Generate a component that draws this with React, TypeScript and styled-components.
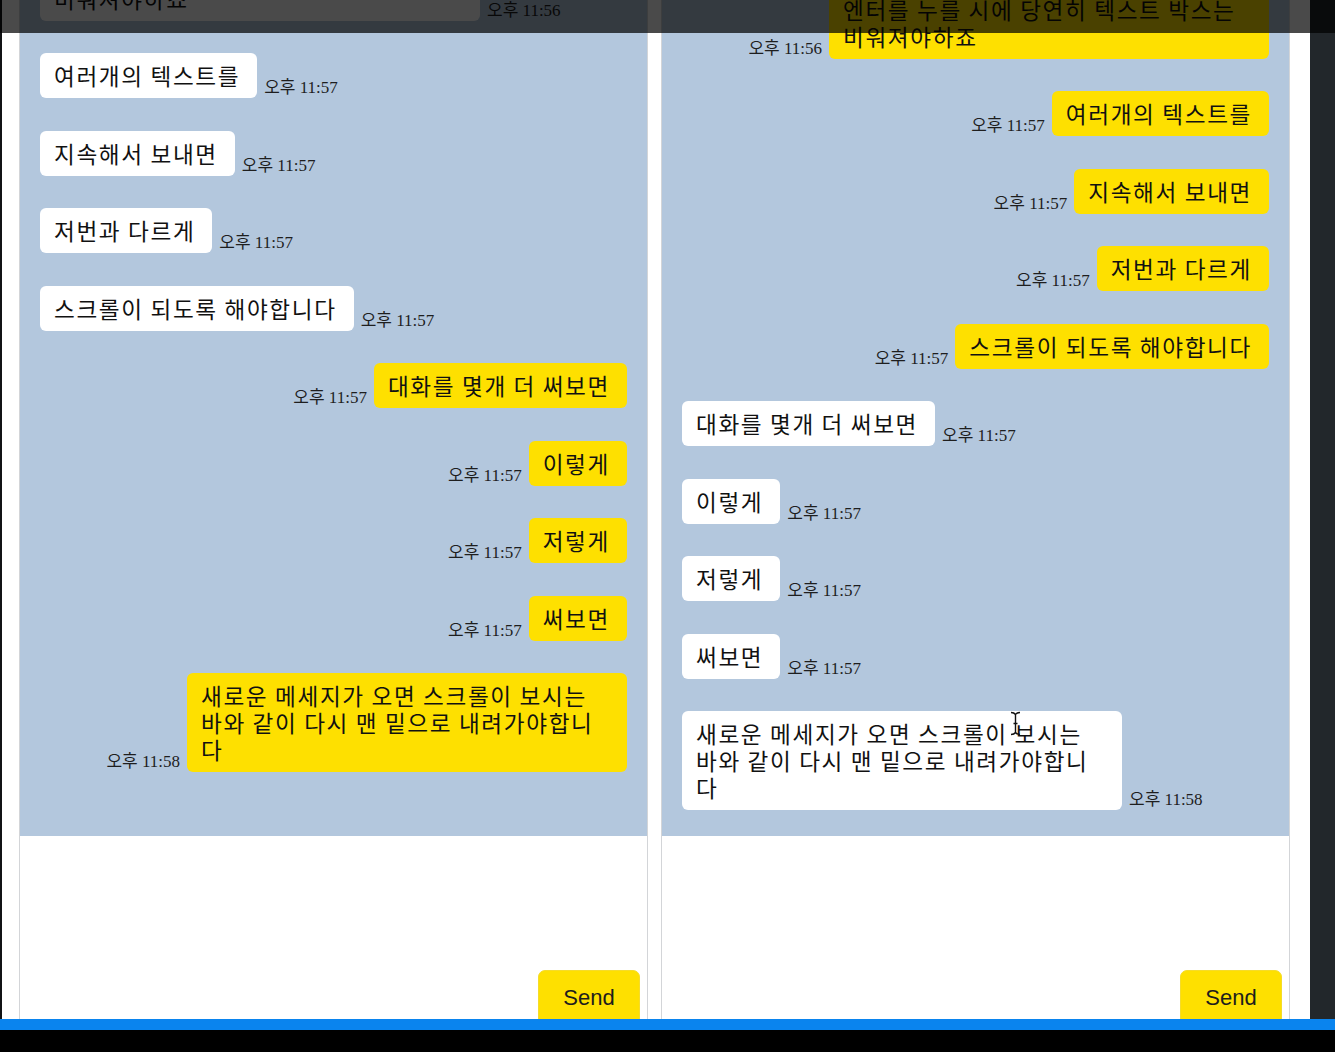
import React from "react";
import styled, { createGlobalStyle } from "styled-components";

const GlobalStyle = createGlobalStyle`
  html, body {
    margin: 0;
    padding: 0;
    background: #000;
    overflow: hidden;
  }
  * { box-sizing: border-box; }
`;

type Side = "in" | "out";
interface Msg {
  side: Side;
  text: string;
  time: string;
}

const Screen = styled.div`
  position: relative;
  width: 1335px;
  height: 1052px;
  background: #000;
  display: flex;
  flex-direction: column;
`;

const Main = styled.div`
  display: flex;
  height: 1019px;
`;

const LeftEdge = styled.div`
  width: 2px;
  background: #111315;
`;

const RightEdge = styled.div`
  width: 25px;
  background: #22272b;
`;

const Workspace = styled.div`
  flex: 1;
  background: #ffffff;
  display: flex;
  gap: 13px;
  padding-left: 17px;
`;

const Panel = styled.section`
  width: 629px;
  display: flex;
  flex-direction: column;
  border-left: 1px solid #d3d5d8;
  border-right: 1px solid #d3d5d8;
`;

const ChatArea = styled.div<{ $bottom: number }>`
  height: 836px;
  background: #b3c7dd;
  overflow: hidden;
  display: flex;
  flex-direction: column;
  justify-content: flex-end;
  gap: 32.5px;
  padding: 0 20px ${(p) => p.$bottom}px 20px;
`;

const Row = styled.div<{ $side: Side }>`
  display: flex;
  flex-direction: ${(p) => (p.$side === "in" ? "row" : "row-reverse")};
  align-items: flex-end;
  gap: 7px;
  flex-shrink: 0;
`;

const Bubble = styled.div<{ $side: Side }>`
  max-width: 440px;
  padding: 9px 17px 9px 14px;
  border-radius: 6px;
  background: ${(p) => (p.$side === "in" ? "#ffffff" : "#fee000")};
  color: #111;
  font-family: "Noto Sans CJK KR", "Noto Sans", sans-serif;
  font-size: 22.6px;
  letter-spacing: 1.65px;
  line-height: 27px;
  white-space: pre-wrap;
`;

const Time = styled.span`
  font-family: "Liberation Serif", "Noto Sans CJK KR", serif;
  font-size: 17px;
  line-height: 19px;
  color: #1e1e1e;
  white-space: nowrap;
  margin-bottom: 1px;
`;

const InputArea = styled.div`
  flex: 1;
  background: #ffffff;
  overflow: hidden;
  display: flex;
  justify-content: flex-end;
  align-items: flex-start;
  padding: 134px 7px 0 0;
`;

const SendButton = styled.button`
  width: 102px;
  height: 56px;
  border: 1px solid #f5dc2a;
  border-radius: 7px;
  background: #fee000;
  color: #1d1d1d;
  font-family: "Liberation Sans", Arial, sans-serif;
  font-size: 22px;
  padding: 0;
  cursor: pointer;
`;

const BlueBar = styled.div`
  height: 11px;
  background: #0a84ee;
`;

const TopShade = styled.div`
  position: absolute;
  left: 0;
  top: 0;
  width: 100%;
  height: 33px;
  background: rgba(0, 0, 0, 0.71);
  pointer-events: none;
`;

const Cursor = styled.svg`
  position: absolute;
  left: 1010px;
  top: 711px;
`;

const FIRST = "엔터를 누를 시에 당연히 텍스트 박스는 비워져야하죠";
const LAST = "새로운 메세지가 오면 스크롤이 보시는 바와 같이 다시 맨 밑으로 내려가야합니다";

const base: { a: Side; text: string; time: string }[] = [
  { a: "in", text: FIRST, time: "오후 11:56" },
  { a: "in", text: "여러개의 텍스트를", time: "오후 11:57" },
  { a: "in", text: "지속해서 보내면", time: "오후 11:57" },
  { a: "in", text: "저번과 다르게", time: "오후 11:57" },
  { a: "in", text: "스크롤이 되도록 해야합니다", time: "오후 11:57" },
  { a: "out", text: "대화를 몇개 더 써보면", time: "오후 11:57" },
  { a: "out", text: "이렇게", time: "오후 11:57" },
  { a: "out", text: "저렇게", time: "오후 11:57" },
  { a: "out", text: "써보면", time: "오후 11:57" },
  { a: "out", text: LAST, time: "오후 11:58" },
];

const leftMsgs: Msg[] = base.map((m) => ({ side: m.a, text: m.text, time: m.time }));
const rightMsgs: Msg[] = base.map((m) => ({
  side: m.a === "in" ? "out" : "in",
  text: m.text,
  time: m.time,
}));

function ChatPanel({ messages, bottom }: { messages: Msg[]; bottom: number }) {
  return (
    <Panel>
      <ChatArea $bottom={bottom}>
        {messages.map((m, i) => (
          <Row key={i} $side={m.side}>
            <Bubble $side={m.side}>{m.text}</Bubble>
            <Time>{m.time}</Time>
          </Row>
        ))}
      </ChatArea>
      <InputArea>
        <SendButton>Send</SendButton>
      </InputArea>
    </Panel>
  );
}

export default function App() {
  return (
    <>
      <GlobalStyle />
      <Screen>
        <Main>
          <LeftEdge />
          <Workspace>
            <ChatPanel messages={leftMsgs} bottom={64} />
            <ChatPanel messages={rightMsgs} bottom={26} />
          </Workspace>
          <RightEdge />
        </Main>
        <BlueBar />
        <TopShade />
        <Cursor width="11" height="25" viewBox="0 0 11 25">
          <path
            d="M1 1.5 C3 1.5 4.5 2 5.5 3.5 C6.5 2 8 1.5 10 1.5 M5.5 3.5 V21.5 M1 23.5 C3 23.5 4.5 23 5.5 21.5 C6.5 23 8 23.5 10 23.5 M3.5 12.5 H7.5"
            fill="none"
            stroke="#111"
            strokeWidth="1.4"
          />
        </Cursor>
      </Screen>
    </>
  );
}
